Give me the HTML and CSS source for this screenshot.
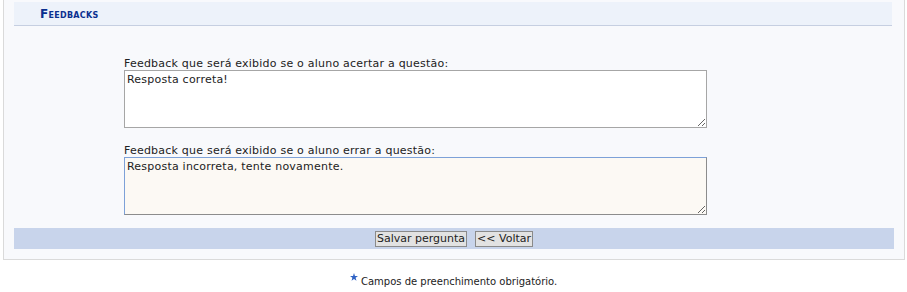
FILE: index.html
```html
<!DOCTYPE html>
<html>
<head>
    <link rel="stylesheet" href="styles.css">
</head>
<body>
    <div class="box">
        <div class="box-header">Feedbacks</div>

        <div class="fields">
            <div class="field">
                <label for="feedbackOk">Feedback que será exibido se o aluno acertar a questão:</label>
                <textarea id="feedbackOk">Resposta correta!</textarea>
            </div>
            <div class="field">
                <label for="feedbackErr">Feedback que será exibido se o aluno errar a questão:</label>
                <textarea id="feedbackErr" class="focused">Resposta incorreta, tente novamente.</textarea>
            </div>
        </div>

        <div class="button-bar">
            <button>Salvar pergunta</button>
            <button>&lt;&lt; Voltar</button>
        </div>
    </div>

    <div class="required-note">
        <svg class="star" width="8" height="8" viewBox="0 0 10 10">
            <path d="M5 0 L6.2 3.6 L10 3.7 L7 6 L8.1 9.7 L5 7.5 L1.9 9.7 L3 6 L0 3.7 L3.8 3.6 Z" fill="#2f62c4"/>
        </svg>
        Campos de preenchimento obrigatório.
    </div>
</body>
</html>
```

FILE: styles.css
```css
body {
    margin: 0;
    font-family: "DejaVu Sans", Verdana, sans-serif;
    font-size: 11px;
    color: #222;
    background: #fff;
}
.box {
    margin: 0 2px 0 3px;
    padding: 2px 10px 10px;
    border: 1px solid #dadada;
    border-top: none;
    background: #f8f9fc;
}
.box-header {
    height: 23px;
    line-height: 24px;
    margin-right: 2px;
    padding-left: 26px;
    background: #edf2fa;
    border-bottom: 1px solid #c6cfe1;
    color: #0b2f8f;
    font-weight: bold;
    font-variant: small-caps;
    font-size: 12px;
    letter-spacing: 0.3px;
}
.fields {
    padding: 32px 0 0 110px;
}
.field {
    margin-bottom: 17px;
}
.field:last-child {
    margin-bottom: 13px;
}
label {
    display: block;
    line-height: 12px;
    letter-spacing: 0.22px;
}
textarea {
    display: block;
    box-sizing: border-box;
    width: 583px;
    height: 58px;
    margin: 0;
    padding: 2px;
    border: 1px solid #a6a6a6;
    background: #fff;
    font-family: "DejaVu Sans", Verdana, sans-serif;
    font-size: 11px;
    letter-spacing: 0.22px;
    color: #222;
}
textarea.focused {
    background: #fcf9f4;
    border-color: #7da1d8 #8c8c8c #8c8c8c #7da1d8;
}
.button-bar {
    height: 21px;
    display: flex;
    justify-content: center;
    align-items: center;
    gap: 8px;
    background: #c8d4eb;
}
button {
    height: 16px;
    padding: 0 1px;
    border: 1px solid #8a8a8a;
    border-radius: 0;
    background: #e2e2e2;
    font-family: "DejaVu Sans", Verdana, sans-serif;
    font-size: 11px;
    color: #222;
    line-height: 14px;
}
.required-note {
    margin-top: 13px;
    text-align: center;
    font-size: 10px;
    color: #222;
}
.star {
    vertical-align: 4px;
}
```
